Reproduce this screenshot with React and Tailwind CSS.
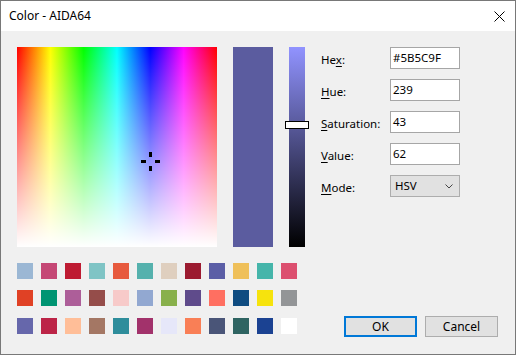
import React from "react";

const swatches = [
  "#9bb7d4", "#c54775", "#be1b32", "#7fc4c5", "#e75a3e", "#55b1ad", "#dfcfbf", "#9b1b30", "#5b5ea6", "#efc05a", "#45b5aa", "#dc4f6f",
  "#e04125", "#009472", "#ad5e99", "#954d4a", "#f7cac9", "#92a8d1", "#88b04b", "#5f4b8b", "#ff6f61", "#0f4c81", "#f6e30d", "#939597",
  "#6667ab", "#bc2447", "#ffbe98", "#a47764", "#2e8d9b", "#a2326b", "#e6e7f9", "#f97f56", "#4a5578", "#2f6462", "#1b4292", "#ffffff",
];

function Label({ u, rest, pre = "" }) {
  return (
    <span className="text-[11.5px] text-black">
      {pre}
      <span className="underline underline-offset-[2px]">{u}</span>
      {rest}
    </span>
  );
}

function Field({ label, value }) {
  return (
    <div className="flex items-center h-[22px]">
      <div className="w-[69px]">{label}</div>
      <div className="w-[70px] h-[22px] bg-white border border-[#a6a6a6] flex items-center pl-[2px] text-[11.5px] text-black">
        {value}
      </div>
    </div>
  );
}

export default function App() {
  return (
    <div
      className="w-[516px] h-[355px] border border-[#787878] bg-[#f0f0f0] flex flex-col"
      style={{ fontFamily: '"Noto Sans", "Open Sans", sans-serif' }}
    >
      <div className="h-[30px] bg-white flex items-center justify-between pl-[8px] pr-[10px] shrink-0">
        <span className="text-[12px] text-black">Color - AIDA64</span>
        <svg width="11" height="11" viewBox="0 0 11 11">
          <path d="M0.5 0.5 L10.5 10.5 M10.5 0.5 L0.5 10.5" stroke="#000" strokeWidth="1" fill="none" />
        </svg>
      </div>
      <div className="flex-1 flex flex-col pl-[16px] pt-[16px] pr-[16px]">
        <div className="flex">
          <div className="relative w-[200px] h-[200px] bg-[linear-gradient(to_right,#f00,#ff0,#0f0,#0ff,#00f,#f0f,#f00)]">
            <div className="absolute inset-0 bg-[linear-gradient(to_bottom,rgba(255,255,255,0),#fff)]" />
            <div className="absolute left-[132px] top-[105px] w-[3px] h-[5px] bg-black" />
            <div className="absolute left-[124px] top-[113px] w-[5px] h-[3px] bg-black" />
            <div className="absolute left-[138px] top-[113px] w-[5px] h-[3px] bg-black" />
            <div className="absolute left-[132px] top-[119px] w-[3px] h-[5px] bg-black" />
          </div>
          <div className="ml-[16px] w-[40px] h-[200px] bg-[#5b5c9f]" />
          <div className="relative ml-[16px] w-[16px] h-[200px] bg-[linear-gradient(to_bottom,#9193ff,#000)]">
            <div className="absolute left-[-4px] top-[74px] w-[24px] h-[8px] bg-white border border-black" />
          </div>
          <div className="ml-[16px] flex flex-col gap-[10px]">
            <Field label={<Label pre="He" u="x" rest=":" />} value="#5B5C9F" />
            <Field label={<Label u="H" rest="ue:" />} value="239" />
            <Field label={<Label u="S" rest="aturation:" />} value="43" />
            <Field label={<Label u="V" rest="alue:" />} value="62" />
            <div className="flex items-center h-[22px]">
              <div className="w-[69px]">
                <Label u="M" rest="ode:" />
              </div>
              <div className="w-[70px] h-[22px] bg-[#e1e1e1] border border-[#adadad] flex items-center justify-between pl-[4px] pr-[6px] text-[11.5px] text-black">
                <span>HSV</span>
                <svg width="8" height="5" viewBox="0 0 8 5">
                  <path d="M0.5 0.5 L4 4 L7.5 0.5" stroke="#444" strokeWidth="1" fill="none" />
                </svg>
              </div>
            </div>
          </div>
        </div>
        <div className="flex mt-[16px]">
          <div className="grid grid-cols-[repeat(12,16px)] gap-[8px]">
            {swatches.map((c, i) => (
              <div key={i} className="w-[16px] h-[16px]" style={{ backgroundColor: c }} />
            ))}
          </div>
          <div className="ml-auto mt-[53px] flex gap-[8px] mr-[1px]">
            <div className="w-[73px] h-[21px] bg-[#e1e1e1] border-2 border-[#0078d7] flex items-center justify-center text-[12px] text-black">
              OK
            </div>
            <div className="w-[73px] h-[21px] bg-[#e1e1e1] border border-[#adadad] flex items-center justify-center text-[12px] text-black">
              Cancel
            </div>
          </div>
        </div>
      </div>
    </div>
  );
}
